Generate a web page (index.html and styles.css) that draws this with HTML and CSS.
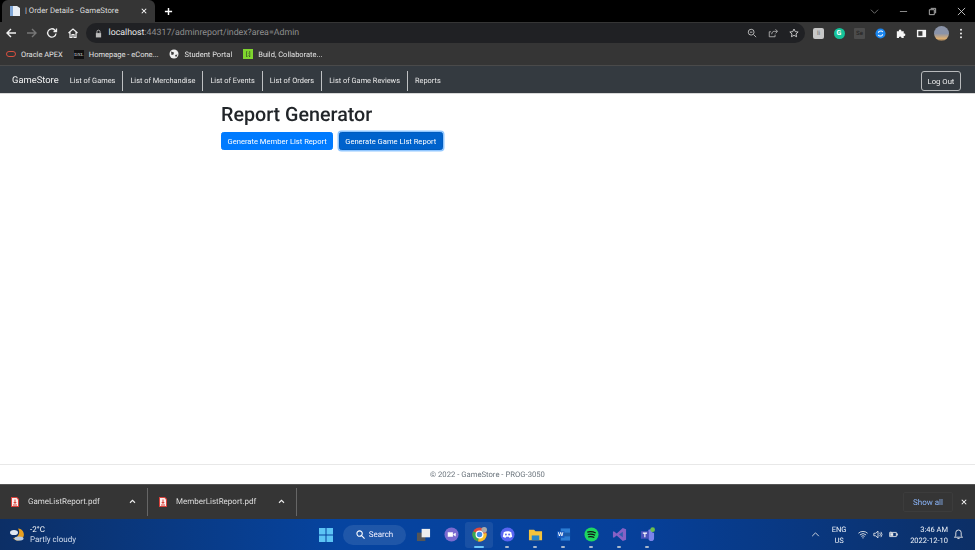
FILE: index.html
```html
<!DOCTYPE html>
<html lang="en">
<head>
<meta charset="utf-8">
<title>Order Details - GameStore</title>
<link rel="stylesheet" href="styles.css">
</head>
<body>
<div class="screen">
  <div class="tabstrip">
    <div class="tab">
      <svg class="tab-icon" viewBox="0 0 12 12"><path d="M1 1h7l3 2v8H1z" fill="#e8eef5"/><path d="M1 1h3v10H1z" fill="#7fa6d6"/></svg>
      <span class="tab-title">| Order Details - GameStore</span>
      <svg class="tab-close" viewBox="0 0 8 8"><path d="M1 1l6 6M7 1L1 7" stroke="#fff" stroke-width="1.4"/></svg>
    </div>
    <svg class="new-tab" viewBox="0 0 10 10"><path d="M5 1v8M1 5h8" stroke="#fff" stroke-width="1.6"/></svg>
    <div class="window-controls">
      <svg class="wc wc-chev" viewBox="0 0 10 10"><path d="M1 3l4 4 4-4" fill="none" stroke="#777" stroke-width="1"/></svg>
      <svg class="wc wc-min" viewBox="0 0 10 10"><path d="M1 5h8" stroke="#999" stroke-width="1"/></svg>
      <svg class="wc wc-max" viewBox="0 0 10 10"><path d="M3 1.500h5.500V7M1.500 3h5.500v5.500H1.500z" fill="none" stroke="#bbb" stroke-width="1"/></svg>
      <svg class="wc wc-x" viewBox="0 0 10 10"><path d="M1 1l8 8M9 1L1 9" stroke="#ccc" stroke-width="1"/></svg>
    </div>
  </div>

  <div class="toolbar">
    <div class="nav-buttons">
      <svg class="tb-icon" viewBox="0 0 12 12"><path d="M11 6H2M6 2L2 6l4 4" fill="none" stroke="#f0f0f0" stroke-width="1.4"/></svg>
      <svg class="tb-icon" viewBox="0 0 12 12"><path d="M1 6h9M6 2l4 4-4 4" fill="none" stroke="#777" stroke-width="1.4"/></svg>
      <svg class="tb-icon" viewBox="0 0 12 12"><path d="M10 6.500A4.200 4.200 0 1 1 8.800 3L10.500 4.500M10.500 1.500v3h-3" fill="none" stroke="#f0f0f0" stroke-width="1.300"/></svg>
      <svg class="tb-icon" viewBox="0 0 12 12"><path d="M1.500 6L6 2l4.500 4M3 5.200V10.500h2V7.500h2v3h2V5.200" fill="none" stroke="#f0f0f0" stroke-width="1.200"/></svg>
    </div>
    <div class="omnibox">
      <svg class="lock" viewBox="0 0 8 10"><path d="M1 4.500h6V9.500H1z" fill="#bbb"/><path d="M2.200 4.500V3a1.800 1.800 0 0 1 3.600 0v1.500" fill="none" stroke="#bbb"/></svg>
      <span class="url"><span class="url-host">localhost</span>:44317/adminreport/index?area=Admin</span>
      <div class="omni-actions">
        <svg class="om-icon" viewBox="0 0 12 12"><circle cx="5" cy="5" r="3.500" fill="none" stroke="#ccc"/><path d="M3.500 5h3M8 8l3 3" stroke="#ccc"/></svg>
        <svg class="om-icon" viewBox="0 0 12 12"><path d="M9 1.500l2.500 2.500L9 6.500M11 4H7.500C5.500 4 4.500 5.500 4.500 7.500M8.500 8v2.500h-7v-6h2" fill="none" stroke="#bbb"/></svg>
        <svg class="om-icon" viewBox="0 0 12 12"><path d="M6 1.200l1.500 3.200 3.500.4-2.600 2.300.7 3.400L6 8.800l-3.100 1.700.7-3.400L1 4.800l3.500-.4z" fill="none" stroke="#ddd"/></svg>
      </div>
    </div>
    <div class="extensions">
      <span class="ext ext-grey">li</span>
      <span class="ext ext-green">G</span>
      <span class="ext ext-dark">Se</span>
      <svg class="ext-svg" viewBox="0 0 12 12"><circle cx="6" cy="6" r="5.500" fill="#1a86f0"/><path d="M8.500 4.500C8 3.200 6 2.700 4.500 3.700L3.500 5M3.500 7.500C4 8.800 6 9.300 7.500 8.300L8.500 7" fill="none" stroke="#fff" stroke-width="1.100"/></svg>
      <svg class="ext-svg" viewBox="0 0 12 12"><path d="M2 3.500h2.200a1.400 1.400 0 1 1 2.700 0H9.500V6a1.400 1.400 0 1 1 0 2.700V11H7a1.400 1.400 0 1 0-2.700 0H2z" fill="#f5f5f5"/></svg>
      <svg class="ext-svg" viewBox="0 0 12 12"><path d="M1 2h10v8H1z" fill="#f5f5f5"/><path d="M2.500 3.500h4.500v5H2.500z" fill="#3a3a3a"/></svg>
      <span class="avatar"></span>
      <svg class="ext-svg ext-menu" viewBox="0 0 4 12"><circle cx="2" cy="2" r="1.100" fill="#eee"/><circle cx="2" cy="6" r="1.100" fill="#eee"/><circle cx="2" cy="10" r="1.100" fill="#eee"/></svg>
    </div>
  </div>

  <div class="bookmarks">
    <span class="bm"><span class="bm-oracle"></span>Oracle APEX</span>
    <span class="bm"><span class="bm-dxl">DXL</span>Homepage - eCone...</span>
    <span class="bm"><svg class="bm-globe" viewBox="0 0 10 10"><circle cx="5" cy="5" r="4.500" fill="#eee"/><path d="M2 2.500l3 1 -.5 2-2 .5zM6 6l2.500-.5L7 8.500z" fill="#3a3a3a"/></svg>Student Portal</span>
    <span class="bm"><span class="bm-build">[:]</span>Build, Collaborate...</span>
  </div>

  <nav class="navbar">
    <span class="brand">GameStore</span>
    <ul class="nav-links">
      <li>List of Games</li>
      <li>List of Merchandise</li>
      <li>List of Events</li>
      <li>List of Orders</li>
      <li>List of Game Reviews</li>
      <li>Reports</li>
    </ul>
    <button class="logout">Log Out</button>
  </nav>

  <main class="content">
    <h1>Report Generator</h1>
    <div class="actions">
      <button class="btn">Generate Member List Report</button>
      <button class="btn btn-focus">Generate Game List Report</button>
    </div>
  </main>

  <footer class="footer">© 2022 - GameStore - PROG-3050</footer>

  <div class="downloads">
    <div class="dl dl-first">
      <svg class="pdf" viewBox="0 0 8 10"><path d="M0 0h6l2 2v8H0z" fill="#d8403a"/><path d="M1 1h4.500L7 2.500V9H1z" fill="#fbeeee"/><path d="M3.500 2.500h1V5h1.300L4 7 2.200 5h1.300zM2 7.500h4v1H2z" fill="#d8403a"/></svg>
      <span class="dl-name">GameListReport.pdf</span>
      <svg class="dl-chev" viewBox="0 0 8 6"><path d="M1 4.500L4 1.500l3 3" fill="none" stroke="#eee" stroke-width="1.300"/></svg>
    </div>
    <div class="dl dl-second">
      <svg class="pdf" viewBox="0 0 8 10"><path d="M0 0h6l2 2v8H0z" fill="#d8403a"/><path d="M1 1h4.500L7 2.500V9H1z" fill="#fbeeee"/><path d="M3.500 2.500h1V5h1.300L4 7 2.200 5h1.300zM2 7.500h4v1H2z" fill="#d8403a"/></svg>
      <span class="dl-name">MemberListReport.pdf</span>
      <svg class="dl-chev" viewBox="0 0 8 6"><path d="M1 4.500L4 1.500l3 3" fill="none" stroke="#eee" stroke-width="1.300"/></svg>
    </div>
    <span class="show-all">Show all</span>
    <svg class="dl-close" viewBox="0 0 8 8"><path d="M1 1l6 6M7 1L1 7" stroke="#fff" stroke-width="1.400"/></svg>
  </div>

  <div class="taskbar">
    <div class="weather">
      <svg class="weather-icon" viewBox="0 0 16 14"><path d="M9 1a6 6 0 1 1-5 9.500A6 6 0 0 0 9 1z" fill="#e8a020"/><ellipse cx="5" cy="5" rx="4" ry="2.600" fill="#dfe8f2"/><ellipse cx="10" cy="11" rx="4.500" ry="2" fill="#b9cde4"/></svg>
      <div class="weather-text"><span class="temp">-2°C</span><span class="cond">Partly cloudy</span></div>
    </div>
    <div class="task-center">
      <svg class="win" viewBox="0 0 14 14"><path d="M0 0h6.500v6.500H0zM7.500 0H14v6.500H7.500zM0 7.500h6.500V14H0zM7.500 7.500H14V14H7.500z" fill="#5cc4f5"/></svg>
      <div class="search">
        <svg class="search-icon" viewBox="0 0 10 10"><circle cx="4" cy="4" r="3" fill="none" stroke="#fff" stroke-width="1.200"/><path d="M6.200 6.200L9.500 9.500" stroke="#fff" stroke-width="1.200"/></svg>
        <span>Search</span>
      </div>
      <div class="task"><svg viewBox="0 0 16 16"><path d="M1 6h9v9H1z" fill="#555"/><path d="M6 2h9v9H6z" fill="#eee"/></svg></div>
      <div class="task"><svg viewBox="0 0 16 16"><circle cx="8" cy="8" r="7.500" fill="#7b6bd0"/><path d="M4 5.500h5.500v5H4zM10 7.500l2.500-1.500v4L10 8.500z" fill="#fff"/></svg></div>
      <div class="task task-active"><svg viewBox="0 0 16 16"><circle cx="8" cy="8" r="7.500" fill="#e04a3a"/><path d="M8 8L1.300 4.500A7.500 7.500 0 0 0 6.500 15.400z" fill="#36a853"/><path d="M8 8l7.400-1.500A7.500 7.500 0 0 1 6.500 15.400z" fill="#f5c02c"/><circle cx="8" cy="8" r="3.600" fill="#3f8ce8" stroke="#fff" stroke-width="1.300"/><circle cx="13" cy="3" r="3" fill="#aaa"/></svg></div>
      <div class="task task-open"><svg viewBox="0 0 16 16"><circle cx="8" cy="8" r="7.500" fill="#5865f2"/><path d="M4 5.500c2.500-1.200 5.500-1.200 8 0l1 5c-1 .8-2 1-3 1l-.6-1h-2.800l-.6 1c-1 0-2-.2-3-1z" fill="#fff"/><circle cx="6.300" cy="8" r="1" fill="#5865f2"/><circle cx="9.700" cy="8" r="1" fill="#5865f2"/></svg></div>
      <div class="task task-open"><svg viewBox="0 0 16 16"><path d="M1 3h5.500l1.500 1.500h7V14H1z" fill="#f5c33b"/><path d="M4 9h8v5H4z" fill="#2b86c8"/></svg></div>
      <div class="task task-open"><svg viewBox="0 0 16 16"><path d="M5 1.500h10v13H5z" fill="#2b7cd3"/><path d="M5 6h10v4H5z" fill="#1a5aa8"/><path d="M1 4.500h8v7H1z" fill="#185abd"/><text x="5" y="10" class="word-w">W</text></svg></div>
      <div class="task task-open"><svg viewBox="0 0 16 16"><circle cx="8" cy="8" r="7.500" fill="#1ed760"/><path d="M3.500 5.500c3-.8 6-.6 9 .9M4 8c2.600-.7 5.200-.5 7.800.8M4.500 10.500c2.200-.5 4.400-.4 6.500.7" fill="none" stroke="#111" stroke-width="1.300"/></svg></div>
      <div class="task task-open"><svg viewBox="0 0 16 16"><path d="M11.500 1L15 2.500v11L11.500 15 5 9l-3 2.500L1 11V5l1-.5L5 7z" fill="#8661c5"/><path d="M11.500 5L7.500 8l4 3z" fill="#2d5fb0"/></svg></div>
      <div class="task task-open"><svg viewBox="0 0 16 16"><circle cx="11" cy="5" r="2.500" fill="#7b83eb"/><path d="M7 6h8v6a3 3 0 0 1-6 0z" fill="#7b83eb"/><path d="M1 4.500h8.500v8H1z" fill="#4b53bc"/><path d="M3 6.500h4.500M5.200 6.500v4.500" stroke="#fff" stroke-width="1.200"/><circle cx="13.500" cy="2.800" r="2.500" fill="#6cc04a"/></svg></div>
    </div>
    <div class="tray">
      <svg class="tray-chev" viewBox="0 0 10 6"><path d="M1 5l4-4 4 4" fill="none" stroke="#eee"/></svg>
      <div class="lang"><span>ENG</span><span>US</span></div>
      <svg class="tray-icon" viewBox="0 0 12 10"><path d="M.5 3.500a8 8 0 0 1 11 0M2.300 5.500a5.500 5.500 0 0 1 7.400 0M4 7.300a3 3 0 0 1 4 0" fill="none" stroke="#eee"/><circle cx="6" cy="9" r=".8" fill="#eee"/></svg>
      <svg class="tray-icon" viewBox="0 0 12 10"><path d="M1 3.500h2L6 1v8L3 6.500H1z" fill="none" stroke="#eee"/><path d="M8 3a3 3 0 0 1 0 4M9.500 1.800a5 5 0 0 1 0 6.400" fill="none" stroke="#eee"/></svg>
      <svg class="tray-icon" viewBox="0 0 12 10"><path d="M2 2.500h8v5H2z" fill="none" stroke="#eee"/><path d="M10.500 4h1v2h-1zM3 3.500h3v3H3zM3 1l1.500 2" fill="#eee" stroke="#eee" stroke-width=".5"/></svg>
      <div class="clock"><span>3:46 AM</span><span>2022-12-10</span></div>
      <svg class="tray-bell" viewBox="0 0 10 12"><path d="M5 1a3 3 0 0 1 3 3v3.500l1.500 1.500h-9L2 7.500V4a3 3 0 0 1 3-3zM3.800 10.500h2.400" fill="none" stroke="#eee"/></svg>
    </div>
  </div>
</div>
</body>
</html>
```

FILE: styles.css
```css
* { box-sizing: border-box; }
html, body { margin: 0; padding: 0; }
body { font-family: Roboto, "Open Sans", "Liberation Sans", sans-serif; background: #fff; overflow: hidden; text-rendering: geometricPrecision; }
svg { display: block; flex: none; }
.screen { width: 975px; height: 550px; display: flex; flex-direction: column; overflow: hidden; filter: blur(.3px); }

.tabstrip { height: 22px; background: #000; display: flex; align-items: center; padding-left: 2px; flex: none; }
.tab { width: 153px; height: 22px; background: #353535; border-radius: 6px 6px 0 0; display: flex; align-items: center; padding: 0 7px 1px; color: #dcdcdc; font-size: 7.800px; }
.tab-icon { width: 12px; height: 12px; margin-right: 4px; }
.tab-title { flex: 1; white-space: nowrap; }
.tab-close { width: 6px; height: 6px; margin-right: 1px; }
.new-tab { width: 9px; height: 9px; margin-left: 9px; }
.window-controls { margin-left: auto; display: flex; align-items: center; padding-right: 9px; gap: 20px; }
.wc { width: 9px; height: 9px; }

.toolbar { height: 22px; background: #353535; display: flex; align-items: center; padding-left: 5px; flex: none; }
.nav-buttons { display: flex; gap: 8.500px; }
.tb-icon { width: 12px; height: 12px; }
.omnibox { width: 719px; height: 20px; margin-left: 7px; background: #202124; border-radius: 10px; display: flex; align-items: center; padding: 0 6px 0 9px; color: #8e8e8e; font-size: 8.800px; }
.lock { width: 7px; height: 9px; margin-right: 7px; }
.url { flex: 1; white-space: nowrap; }
.url-host { color: #e8e8e8; }
.omni-actions { display: flex; gap: 11px; }
.om-icon { width: 10px; height: 10px; }
.extensions { display: flex; align-items: center; margin-left: 8.500px; gap: 9.500px; }
.ext { width: 11px; height: 11px; display: flex; align-items: center; justify-content: center; }
.ext-grey { background: #c8c8c8; border-radius: 2px; color: #888; font-size: 6px; font-weight: 700; }
.ext-green { background: #15c39a; border-radius: 50%; color: #fff; font-size: 7px; font-weight: 700; }
.ext-dark { background: #4c4c4c; border-radius: 1px; color: #2a2a2a; font-size: 6px; font-weight: 700; }
.ext-svg { width: 11px; height: 11px; }
.avatar { width: 15px; height: 15px; margin-left: -2px; border-radius: 50%; background: linear-gradient(#8a93a8 50%, #e0b070 85%, #6a5a48); }
.ext-menu { width: 4px; }

.bookmarks { height: 22px; background: #353535; border-bottom: 1px solid #4a4a4a; display: flex; align-items: center; padding: 0 0 1px 6px; color: #e2e2e2; font-size: 7.500px; flex: none; }
.bm { display: flex; align-items: center; white-space: nowrap; }
.bm-oracle { width: 10px; height: 6px; border: 1.200px solid #d9503f; border-radius: 3px; margin-right: 5px; }
.bm:nth-child(2) { margin-left: 11px; }
.bm:nth-child(3) { margin-left: 11px; }
.bm:nth-child(4) { margin-left: 11px; }
.bm-dxl { width: 10px; height: 9px; background: #111; color: #ddd; font-family: "Liberation Serif", serif; font-size: 4.500px; display: flex; align-items: center; justify-content: center; margin-right: 5px; }
.bm-globe { width: 10px; height: 10px; margin-right: 5px; }
.bm-build { width: 10px; height: 10px; background: #7fd62e; color: #222; font-size: 6px; display: flex; align-items: center; justify-content: center; margin-right: 5px; }

.navbar { height: 28px; background: #343a40; display: flex; align-items: center; padding: 3px 14px 0 12px; border-bottom: 1px solid #d8d8d8; flex: none; }
.brand { color: #f2f2f2; font-size: 9.400px; margin: 0 4px 1px 0; }
.nav-links { list-style: none; margin: 0; padding: 0; display: flex; align-items: center; flex: 1; }
.nav-links li { color: #e8e8e8; font-size: 7.400px; padding: 0 7px; height: 20px; line-height: 20px; border-right: 1px solid #bfc1c3; white-space: nowrap; }
.nav-links li:last-child { border-right: 0; }
.logout { width: 40px; height: 20px; padding: 0; background: transparent; border: 1px solid #b8babc; border-radius: 3px; color: #eee; font: inherit; font-size: 7.700px; }

.content { flex: 1; padding: 8px 0 0 221px; color: #212529; }
.content h1 { margin: 0 0 5px; font-size: 19.700px; font-weight: 500; line-height: 25px; }
.actions { display: flex; gap: 5.500px; }
.btn { height: 18px; padding: 0 5.500px; background: #007bff; color: #fff; border: 1px solid #007bff; border-radius: 2.500px; font: inherit; font-size: 7.600px; white-space: nowrap; }
.btn-focus { background: #0062cc; border-color: #005cbf; box-shadow: 0 0 0 1.500px rgba(38, 143, 255, .5); }

.footer { height: 20px; border-top: 1px solid #e8e8e8; background: #fff; color: #6c757d; font-size: 7.700px; line-height: 19px; text-align: center; flex: none; }

.downloads { height: 35px; background: #353535; border-top: 1px solid #555; display: flex; align-items: center; padding-bottom: 1px; color: #ddd; font-size: 8px; flex: none; }
.dl { height: 28px; display: flex; align-items: center; border-right: 1px solid #666; }
.dl-first { width: 148px; padding-left: 11px; }
.dl-second { width: 149px; padding-left: 11px; }
.pdf { width: 8px; height: 10px; margin-right: 9px; }
.dl-name { flex: 1; white-space: nowrap; }
.dl-chev { width: 7px; height: 5px; margin-right: 11px; }
.show-all { margin-left: auto; width: 50px; height: 20px; line-height: 19px; text-align: center; border: 1px solid #3c3c3c; border-radius: 2px; color: #8ab4f8; }
.dl-close { width: 6px; height: 6px; margin: 0 8px; }

.taskbar { height: 31px; flex: none; background: linear-gradient(90deg, #0c2f66 0, #0644a0 35%, #06409a 65%, #0c2f66 100%); display: flex; align-items: center; color: #eef3fa; font-size: 8px; position: relative; }
.weather { display: flex; align-items: center; padding-left: 9px; width: 319px; }
.weather-icon { width: 16px; height: 15px; margin-right: 5px; }
.weather-text { display: flex; flex-direction: column; line-height: 10px; }
.temp { color: #fff; }
.cond { color: #d0dcee; }
.task-center { display: flex; align-items: center; }
.win { width: 14px; height: 14px; }
.search { width: 63px; height: 20px; margin: 0 3px 0 10px; background: rgba(255, 255, 255, .1); border-radius: 10px; display: flex; align-items: center; justify-content: center; gap: 4px; color: #eef; font-size: 8px; }
.search-icon { width: 9px; height: 9px; }
.task { width: 28px; height: 26px; display: flex; align-items: center; justify-content: center; position: relative; }
.task svg { width: 15px; height: 15px; }
.word-w { fill: #fff; font-family: "Liberation Sans", sans-serif; font-size: 6px; font-weight: 700; text-anchor: middle; }
.task-active { background: rgba(255, 255, 255, .08); border-radius: 3px; }
.task-active::after, .task-open::after { content: ""; position: absolute; bottom: 0; left: 50%; height: 2px; border-radius: 1px; transform: translateX(-50%); }
.task-active::after { width: 10px; background: #6cc6f8; }
.task-open::after { width: 4px; background: #a9b8cc; }
.tray { margin-left: auto; display: flex; align-items: center; padding-right: 12.500px; font-size: 7.500px; }
.tray-chev { width: 9px; height: 5px; margin-right: 12px; }
.lang { display: flex; flex-direction: column; align-items: center; line-height: 11px; margin-right: 11.500px; width: 15px; }
.tray-icon { width: 10px; height: 9px; margin-right: 5px; }
.clock { display: flex; flex-direction: column; align-items: flex-end; line-height: 11px; margin: 0 5.500px 0 7px; white-space: nowrap; }
.tray-bell { width: 9px; height: 11px; }
```
